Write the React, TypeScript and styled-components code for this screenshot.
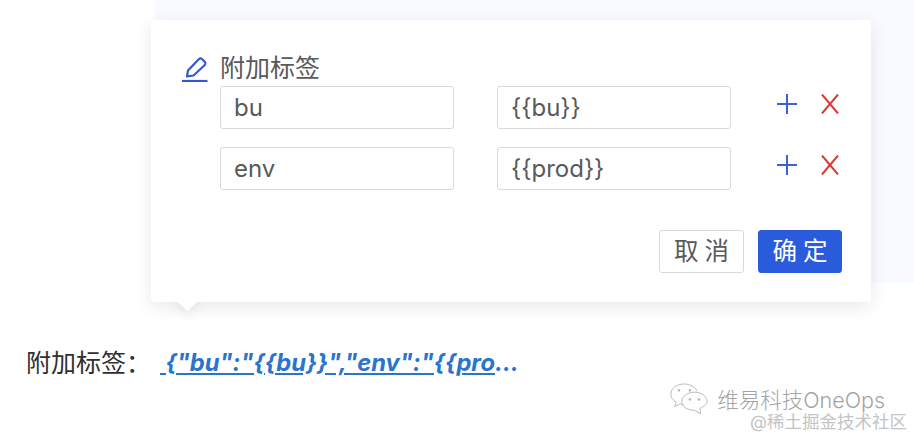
import React from "react";
import styled, { createGlobalStyle } from "styled-components";

const FONT = `Inter, "Noto Sans CJK SC", sans-serif`;

const Global = createGlobalStyle`
  html, body { margin: 0; padding: 0; background: #fff; }
  body { font-family: ${FONT}; overflow: hidden; }
`;

const Page = styled.div`
  position: relative;
  width: 914px;
  height: 440px;
  padding: 20px 0 0 26px;
  box-sizing: border-box;
  overflow: hidden;
  background: #fff;
`;

const Backdrop = styled.div`
  position: absolute;
  left: 155px;
  top: 0;
  right: 0;
  height: 283px;
  background: #f9faff;
`;

const Card = styled.div`
  position: relative;
  width: 720px;
  height: 282px;
  margin-left: 125px;
  padding: 36px 29px 29px 31px;
  box-sizing: border-box;
  background: #fff;
  border-radius: 3px;
  box-shadow: 0 5px 18px rgba(0, 0, 0, 0.09);
  display: flex;
  flex-direction: column;
`;

const Arrow = styled.div`
  position: absolute;
  left: 28px;
  bottom: -6px;
  width: 17px;
  height: 17px;
  background: #fff;
  transform: rotate(45deg);
  box-shadow: 4px 4px 8px rgba(0, 0, 0, 0.05);
`;

const TitleRow = styled.div`
  display: flex;
  align-items: flex-start;
  height: 30px;
  gap: 12px;
`;

const Title = styled.span`
  font-size: 25px;
  line-height: 24px;
  color: #595959;
`;

const FieldRows = styled.div`
  display: flex;
  flex-direction: column;
  gap: 18px;
  margin-left: 38px;
`;

const FieldRow = styled.div`
  display: flex;
  align-items: center;
  height: 43px;
`;

const Field = styled.div`
  width: 234px;
  height: 43px;
  box-sizing: border-box;
  padding-left: 13px;
  margin-right: 43px;
  border: 1px solid #d9d9d9;
  border-radius: 3px;
  font-size: 24px;
  line-height: 41px;
  color: #595959;
`;

const Actions = styled.div`
  display: flex;
  align-items: center;
  gap: 24px;
  margin: 0 0 7px 3px;
`;

const Footer = styled.div`
  display: flex;
  justify-content: flex-end;
  gap: 14px;
  margin-top: 40px;
`;

const Button = styled.div<{ $primary?: boolean }>`
  height: 43px;
  width: ${(p) => (p.$primary ? "84px" : "85px")};
  box-sizing: border-box;
  border: 1px solid ${(p) => (p.$primary ? "#2b5bdd" : "#d9d9d9")};
  border-radius: 3px;
  background: ${(p) => (p.$primary ? "#2b5bdd" : "#fff")};
  color: ${(p) => (p.$primary ? "#fff" : "#595959")};
  font-size: 24.5px;
  line-height: 41px;
  text-align: center;
  letter-spacing: 6px;
  padding-left: 6px;
`;

const Summary = styled.div`
  display: flex;
  align-items: center;
  height: 30px;
  margin-top: 46px;
`;

const SummaryLabel = styled.span`
  font-size: 25px;
  line-height: 30px;
  color: #303030;
  width: 134px;
  flex: none;
`;

const SummaryValue = styled.div`
  width: 360px;
  overflow: hidden;
  white-space: nowrap;
  text-overflow: ellipsis;
  font-size: 23.7px;
  line-height: 30px;
  font-weight: 700;
  font-style: italic;
  color: #2a74d0;
`;

const SummaryLink = styled.span`
  text-decoration: underline;
  white-space: pre;
`;

const Watermark = styled.div`
  position: absolute;
  right: 7px;
  top: 383px;
  display: flex;
  flex-direction: column;
  align-items: flex-end;
`;

const BrandRow = styled.div`
  display: flex;
  align-items: center;
  gap: 9px;
  margin-right: 22px;
  height: 30px;
`;

const Brand = styled.span`
  font-size: 21.5px;
  font-weight: 300;
  color: #a4a4a4;
`;

const Credit = styled.span`
  font-size: 17.5px;
  line-height: 22px;
  color: #c4c4c4;
  margin-top: -2px;
`;

function PencilIcon() {
  return (
    <svg width="26" height="26" viewBox="0 0 26 26" fill="none" stroke="#3557d0" strokeWidth="2.2">
      <line x1="0" y1="25" x2="25.5" y2="25" />
      <path d="M5 20.5 L6 14.5 L17 3 Q18.5 1.8 20 3 L23 6 Q24.2 7.4 23 8.8 L11.5 19.5 Z" strokeLinejoin="round" />
    </svg>
  );
}

function PlusIcon() {
  return (
    <svg width="20" height="20" viewBox="0 0 20 20" fill="none" stroke="#3a62d2" strokeWidth="2">
      <path d="M10 0 V20 M0 10 H20" />
    </svg>
  );
}

function CrossIcon() {
  return (
    <svg width="18" height="20" viewBox="0 0 18 20" fill="none" stroke="#d93a30" strokeWidth="2">
      <path d="M1 0.5 L17 19.5 M17 0.5 L1 19.5" />
    </svg>
  );
}

function BubblesIcon() {
  return (
    <svg width="38" height="33" viewBox="0 0 42 36" fill="none" stroke="#b4b4b4" strokeWidth="1">
      <path d="M16 2 C7 2 1 7 1 13 C1 17 3 20 7 22 L5 27 L11 24 C12 24 13 25 15 25" />
      <path d="M16 2 C22 2 28 5 30 10" />
      <path d="M27 11 C19 11 13 16 13 21 C13 27 19 31 27 31 L34 35 L33 29 C37 27 41 25 41 21 C41 16 35 11 27 11 Z" />
      <circle cx="10" cy="9" r="1" fill="#b4b4b4" />
      <circle cx="22" cy="9" r="1" fill="#b4b4b4" />
      <circle cx="22" cy="19" r="1" fill="#b4b4b4" />
      <circle cx="32" cy="19" r="1" fill="#b4b4b4" />
    </svg>
  );
}

const rows = [
  { key: "bu", value: "{{bu}}" },
  { key: "env", value: "{{prod}}" },
];

export default function App() {
  return (
    <Page>
      <Global />
      <Backdrop />
      <Card>
        <TitleRow>
          <PencilIcon />
          <Title>附加标签</Title>
        </TitleRow>
        <FieldRows>
          {rows.map((r) => (
            <FieldRow key={r.key}>
              <Field>{r.key}</Field>
              <Field>{r.value}</Field>
              <Actions>
                <PlusIcon />
                <CrossIcon />
              </Actions>
            </FieldRow>
          ))}
        </FieldRows>
        <Footer>
          <Button>取消</Button>
          <Button $primary>确定</Button>
        </Footer>
        <Arrow />
      </Card>
      <Summary>
        <SummaryLabel>附加标签：</SummaryLabel>
        <SummaryValue>
          <SummaryLink>{` {"bu":"{{bu}}","env":"{{prod}}"}`}</SummaryLink>
        </SummaryValue>
      </Summary>
      <Watermark>
        <BrandRow>
          <BubblesIcon />
          <Brand>维易科技OneOps</Brand>
        </BrandRow>
        <Credit>@稀土掘金技术社区</Credit>
      </Watermark>
    </Page>
  );
}
